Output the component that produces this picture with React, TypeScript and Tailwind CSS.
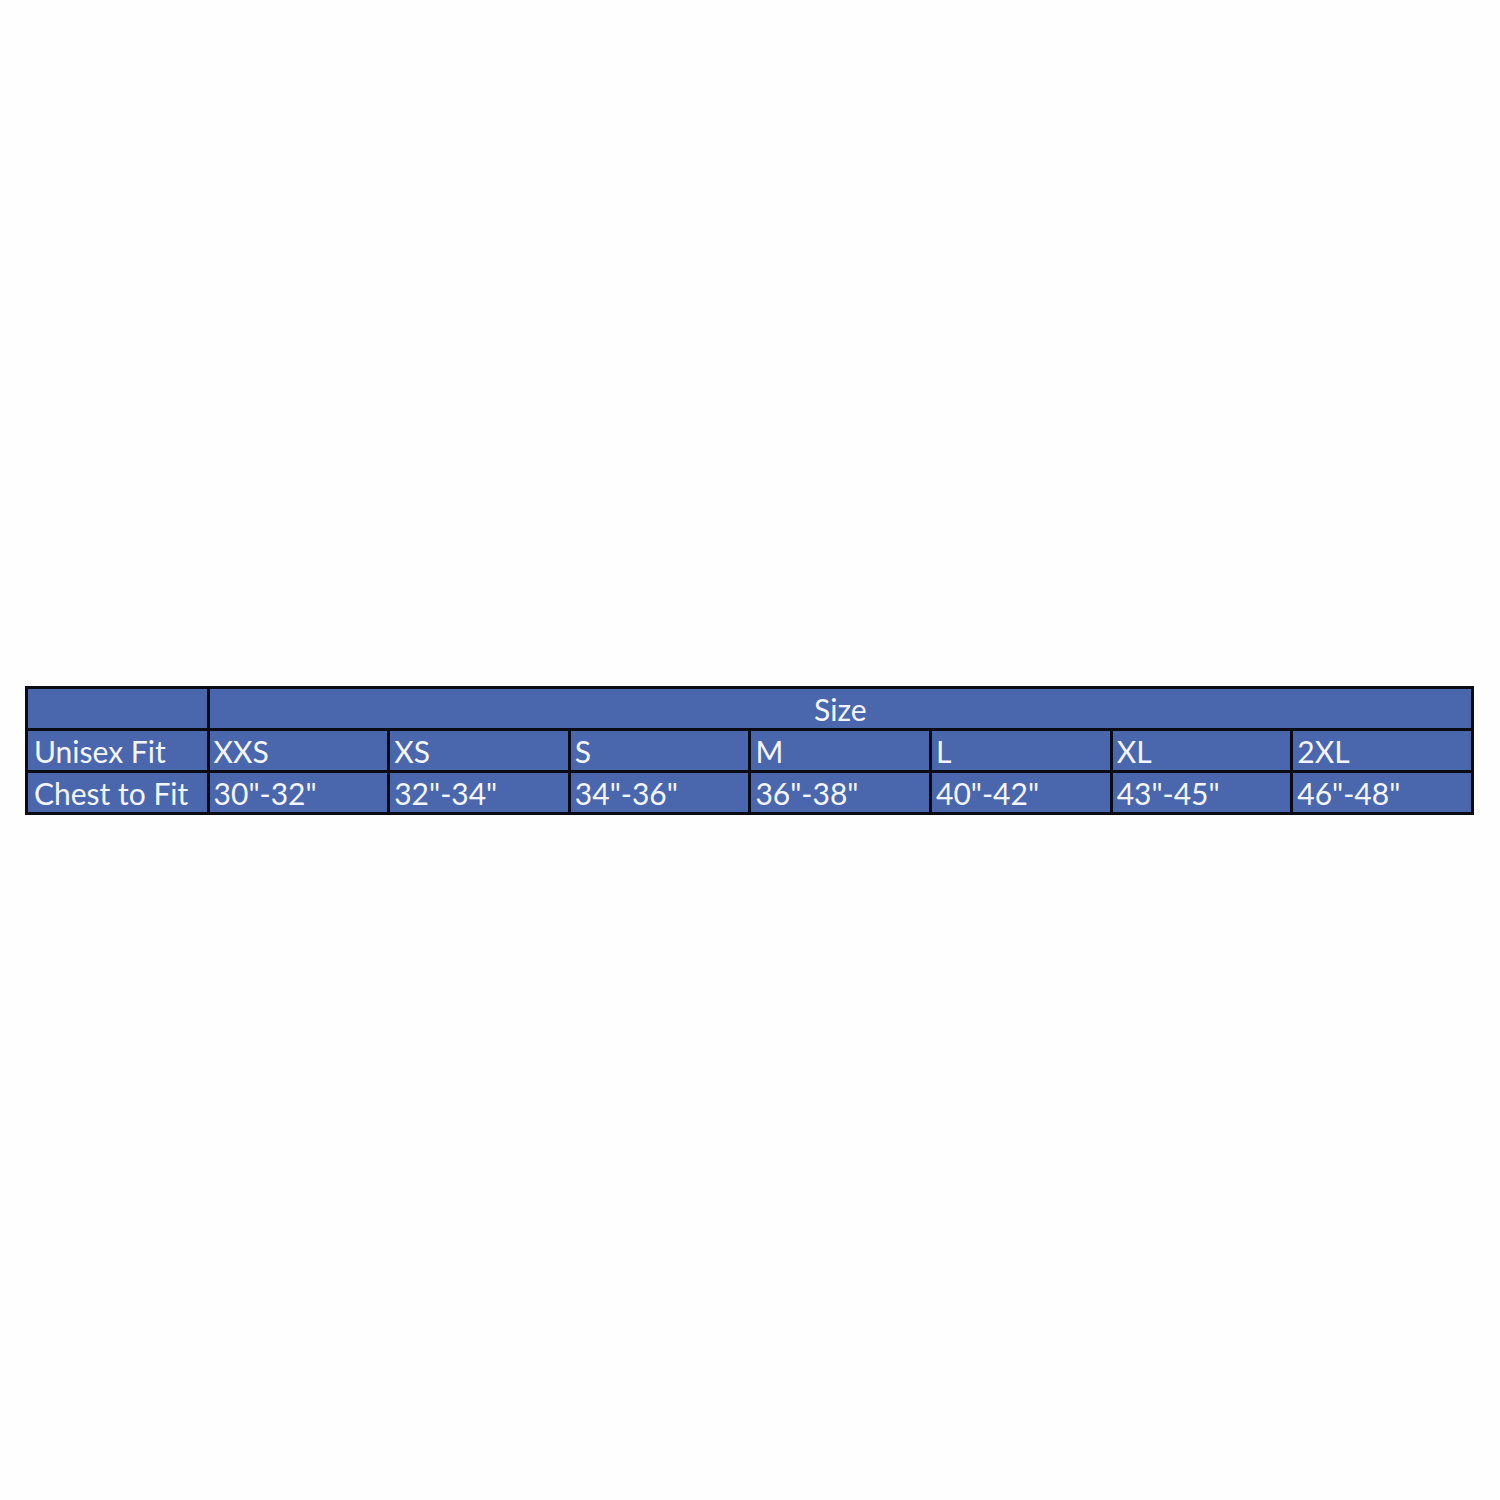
export default function App() {
  const sizes = ['XXS', 'XS', 'S', 'M', 'L', 'XL', '2XL'];
  const chest = ['30"-32"', '32"-34"', '34"-36"', '36"-38"', '40"-42"', '43"-45"', '46"-48"'];
  const cell = 'border-[3px] border-[#0b0b14] px-[4px] h-[42px] p-0 leading-none align-middle';

  return (
    <div className="w-[1500px] h-[1500px] bg-[#fefefe] pt-[686px] pl-[25px]" style={{ fontFamily: 'Lato, "Open Sans", sans-serif' }}>
      <table className="border-collapse table-fixed w-[1449px] bg-[#4a67ad] text-[#f4f5fa] text-[30px]">
        <colgroup>
          <col className="w-[181px]" />
          {sizes.map((s) => (
            <col key={s} className="w-[180px]" />
          ))}
        </colgroup>
        <tbody>
          <tr>
            <td className={cell}></td>
            <td colSpan={7} className={`${cell} text-center`}>Size</td>
          </tr>
          <tr>
            <td className={`${cell} pl-[6px]`}>Unisex Fit</td>
            {sizes.map((s) => (
              <td key={s} className={cell}>{s}</td>
            ))}
          </tr>
          <tr>
            <td className={`${cell} pl-[6px]`}>Chest to Fit</td>
            {chest.map((c) => (
              <td key={c} className={cell}>{c}</td>
            ))}
          </tr>
        </tbody>
      </table>
    </div>
  );
}
